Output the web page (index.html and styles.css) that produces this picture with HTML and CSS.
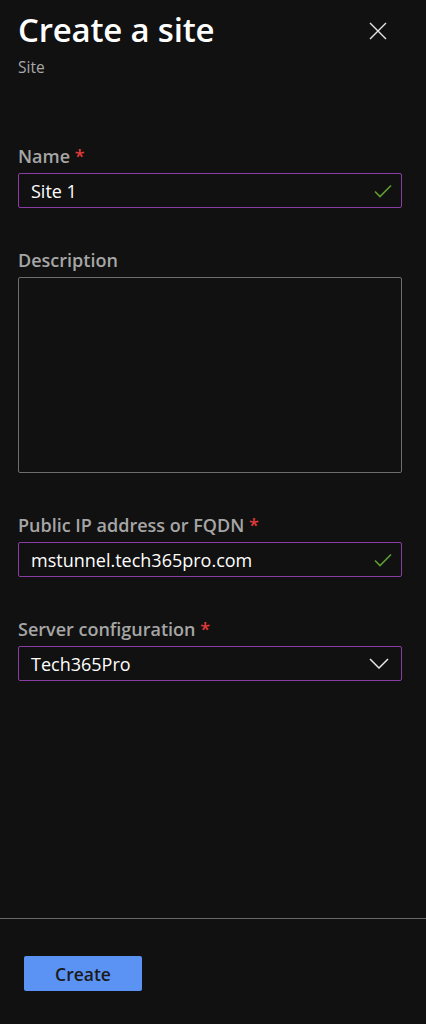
FILE: index.html
```html
<!DOCTYPE html>
<html lang="en">
<head>
<meta charset="utf-8">
<title>Create a site</title>
<link rel="stylesheet" href="styles.css">
</head>
<body>
<div class="panel">
  <main class="content">
    <header class="header">
      <div class="heading">
        <h1 class="title">Create a site</h1>
        <div class="subtitle">Site</div>
      </div>
      <button class="close" aria-label="Close">
        <svg width="18" height="18" viewBox="0 0 18 18"><path d="M1 1 L17 17 M17 1 L1 17" stroke="#e6e6e6" stroke-width="1.4" fill="none"/></svg>
      </button>
    </header>

    <div class="field field-first">
      <label class="label">Name <span class="req">*</span></label>
      <div class="input input-active">
        <span class="value">Site 1</span>
        <svg class="check" width="18" height="14" viewBox="0 0 18 14"><path d="M1 7.5 L6 12.5 L17 1.5" stroke="#5f9e33" stroke-width="1.6" fill="none"/></svg>
      </div>
    </div>

    <div class="field">
      <label class="label">Description</label>
      <div class="textarea"></div>
    </div>

    <div class="field">
      <label class="label">Public IP address or FQDN <span class="req">*</span></label>
      <div class="input input-active">
        <span class="value">mstunnel.tech365pro.com</span>
        <svg class="check" width="18" height="14" viewBox="0 0 18 14"><path d="M1 7.5 L6 12.5 L17 1.5" stroke="#5f9e33" stroke-width="1.6" fill="none"/></svg>
      </div>
    </div>

    <div class="field">
      <label class="label">Server configuration <span class="req">*</span></label>
      <div class="input input-active">
        <span class="value">Tech365Pro</span>
        <svg class="chevron" width="20" height="11" viewBox="0 0 20 11"><path d="M1 1 L10 10 L19 1" stroke="#e6e6e6" stroke-width="1.5" fill="none"/></svg>
      </div>
    </div>
  </main>

  <footer class="footer">
    <button class="primary">Create</button>
  </footer>
</div>
</body>
</html>
```

FILE: styles.css
```css
* { box-sizing: border-box; }

html, body {
  margin: 0;
  padding: 0;
  background: #111111;
}

body {
  font-family: "Open Sans", "Noto Sans", "Liberation Sans", sans-serif;
  color: #ffffff;
}

.panel {
  min-height: 1024px;
  display: flex;
  flex-direction: column;
}

.content {
  flex: 1;
  padding: 8px 24px 0 18px;
}

.header {
  display: flex;
  justify-content: space-between;
  align-items: flex-start;
}

.title {
  margin: 0;
  font-size: 33px;
  line-height: 44px;
  font-weight: 600;
  letter-spacing: -0.2px;
  color: #ffffff;
}

.subtitle {
  font-size: 15.5px;
  line-height: 20px;
  color: #a8a8a8;
  margin-top: 5px;
}

.close {
  background: none;
  border: 0;
  padding: 0;
  margin: 14px 15px 0 0;
  width: 18px;
  height: 18px;
  display: flex;
}

.field {
  margin-top: 41px;
}

.field-first {
  margin-top: 68px;
}

.label {
  display: block;
  font-size: 18px;
  line-height: 22px;
  font-weight: 600;
  color: #a6a6a6;
  margin-bottom: 6px;
}

.req {
  color: #e23b3b;
}

.input {
  height: 35px;
  border: 1px solid #6e6e6e;
  border-radius: 2px;
  display: flex;
  align-items: center;
  justify-content: space-between;
  padding: 0 8px 0 12px;
}

.input-active {
  border-color: #8c3da5;
}

.value {
  font-size: 18px;
  color: #ffffff;
  line-height: 24px;
}

.check {
  margin-right: 1px;
}

.chevron {
  margin-right: 4px;
}

.textarea {
  height: 196px;
  border: 1px solid #6e6e6e;
  border-radius: 2px;
}

.footer {
  border-top: 1px solid #6a6a6a;
  height: 106px;
  padding: 37px 0 0 24px;
}

.primary {
  width: 118px;
  height: 35px;
  background: #5b93f5;
  border: 0;
  border-radius: 2px;
  font-family: inherit;
  font-size: 17.5px;
  font-weight: 600;
  color: #1a1a1a;
  padding: 0;
}
```
